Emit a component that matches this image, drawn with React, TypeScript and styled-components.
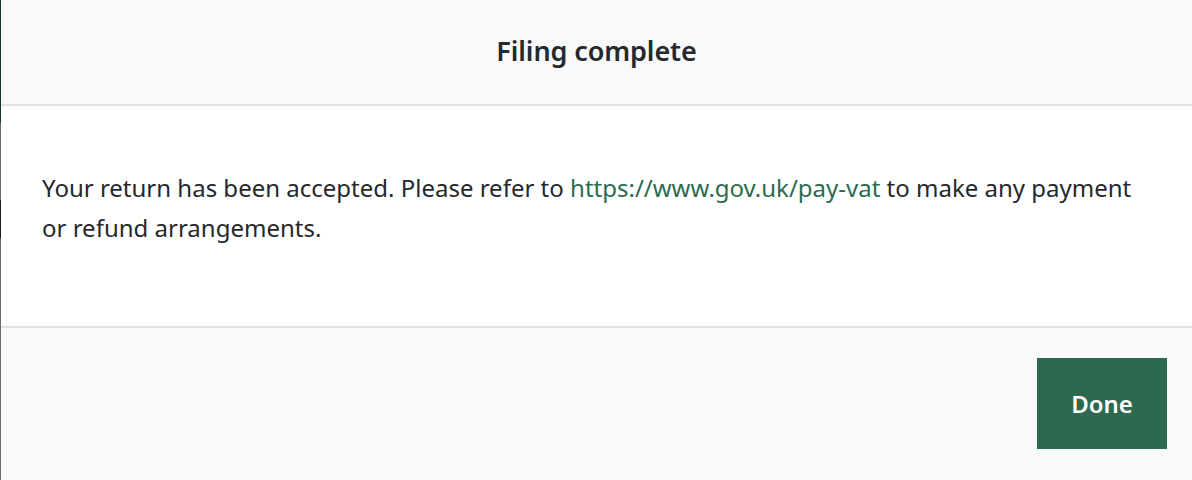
import React, { FC } from 'react'
import styled, { createGlobalStyle } from 'styled-components'

const Colour = {
    text: '#26282b',
    green: '#2c6a4f',
    link: '#2b6b50',
    panel: '#f9f9f9',
    rule: '#e2e2e2',
    white: '#ffffff',
}

const GlobalStyle = createGlobalStyle`
    html, body {
        margin: 0;
        padding: 0;
        background: ${Colour.white};
        font-family: 'Noto Sans', 'Open Sans', sans-serif;
        color: ${Colour.text};
    }
`

const Page = styled.div`
    display: flex;
    width: 100%;
    height: 480px;
    overflow: hidden;
`
// sliver of the page behind the dialog
const Backdrop = styled.div`
    width: 1px;
    flex-shrink: 0;
    background: linear-gradient(
        to bottom,
        #0f3b2c 0px,
        #0f3b2c 123px,
        #6b6b6b 123px,
        #6b6b6b 200px,
        #1c1c1c 200px,
        #1c1c1c 238px,
        #6b6b6b 238px
    );
`
const Dialog = styled.section`
    flex: 1;
    display: flex;
    flex-direction: column;
`
const Header = styled.header`
    height: 106px;
    box-sizing: border-box;
    padding-bottom: 4px;
    display: flex;
    align-items: center;
    justify-content: center;
    background: ${Colour.panel};
    border-bottom: 2px solid ${Colour.rule};
`
const Title = styled.h2`
    margin: 0;
    font-size: 27px;
    font-weight: 600;
    letter-spacing: -0.1px;
`
const Body = styled.div`
    height: 222px;
    box-sizing: border-box;
    padding: 62px 41px 0;
    background: ${Colour.white};
    border-bottom: 2px solid ${Colour.rule};
`
const Message = styled.p`
    margin: 0;
    font-size: 24px;
    line-height: 40px;
`
const Link = styled.a`
    color: ${Colour.link};
    text-decoration: none;
`
const Footer = styled.footer`
    flex: 1;
    display: flex;
    justify-content: flex-end;
    align-items: flex-start;
    padding: 30px 25px 0;
    background: ${Colour.panel};
`
const Button = styled.button<{ primary?: boolean }>`
    width: 130px;
    height: 91px;
    border: none;
    border-radius: 0;
    cursor: pointer;
    font-family: inherit;
    font-size: 24px;
    font-weight: 600;
    color: ${Colour.white};
    background: ${(p) => (p.primary ? Colour.green : '#777')};
`

const App: FC = () => {
    return (
        <Page>
            <GlobalStyle />
            <Backdrop />
            <Dialog>
                <Header>
                    <Title>Filing complete</Title>
                </Header>
                <Body>
                    <Message>
                        Your return has been accepted. Please refer to{' '}
                        <Link href="#">https://www.gov.uk/pay-vat</Link> to
                        make any payment or refund arrangements.
                    </Message>
                </Body>
                <Footer>
                    <Button primary type="button">
                        Done
                    </Button>
                </Footer>
            </Dialog>
        </Page>
    )
}

export default App
